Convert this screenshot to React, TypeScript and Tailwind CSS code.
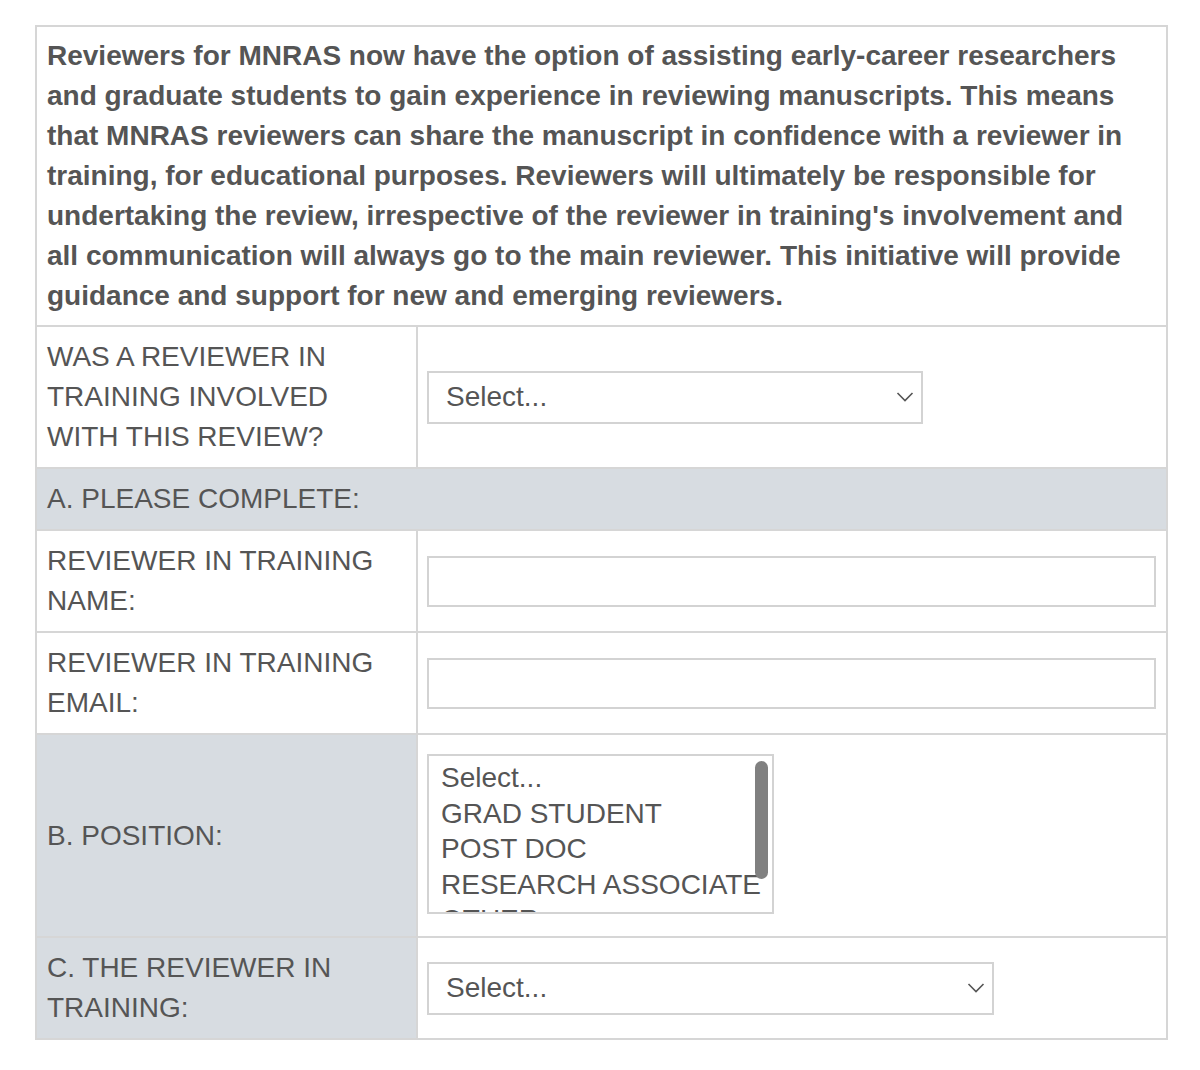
import React from 'react'

const font = { fontFamily: '"Liberation Sans", Arial, sans-serif' }

function Chevron() {
  return (
    <svg width="18" height="12" viewBox="0 0 18 12" className="shrink-0">
      <polyline points="1.5,2 9,9.5 16.5,2" fill="none" stroke="#555" strokeWidth="1.6" />
    </svg>
  )
}

function FakeSelect({ width }: { width: string }) {
  return (
    <div className={`${width} h-[53px] border-2 border-[#d3d3d3] bg-white flex items-center justify-between pl-[17px] pr-[7px]`}>
      <span className="text-[28px] text-[#555]">Select...</span>
      <Chevron />
    </div>
  )
}

function TextBox() {
  return <div className="w-full h-[51px] border-2 border-[#d3d3d3] bg-white" />
}

function Row({ label, gray, children }: { label: React.ReactNode; gray?: boolean; children: React.ReactNode }) {
  return (
    <div className="flex border-t-2 border-[#d6d6d6]">
      <div className={`w-[379px] shrink-0 px-[10px] py-[10px] text-[28px] leading-[40px] text-[#555] flex items-center ${gray ? 'bg-[#d7dce1]' : 'bg-white'}`}>
        <div>{label}</div>
      </div>
      <div className="flex-1 border-l-2 border-[#d6d6d6] pl-[9px] pr-[10px] flex items-center">
        {children}
      </div>
    </div>
  )
}

export default function App() {
  const options = ['Select...', 'GRAD STUDENT', 'POST DOC', 'RESEARCH ASSOCIATE', 'OTHER']
  return (
    <div className="min-h-screen bg-white pt-[25px] pl-[35px]" style={font}>
      <div className="w-[1133px] border-2 border-[#d6d6d6]">
        <div className="px-[10px] pt-[9px] pb-[9px] text-[28px] leading-[40px] font-bold text-[#555]">
          Reviewers for MNRAS now have the option of assisting early-career researchers and graduate students to gain experience in reviewing manuscripts. This means that MNRAS reviewers can share the manuscript in confidence with a reviewer in training, for educational purposes. Reviewers will ultimately be responsible for undertaking the review, irrespective of the reviewer in training's involvement and all communication will always go to the main reviewer. This initiative will provide guidance and support for new and emerging reviewers.
        </div>

        <Row label={<>WAS A REVIEWER IN<br />TRAINING INVOLVED<br />WITH THIS REVIEW?</>}>
          <FakeSelect width="w-[496px]" />
        </Row>

        <div className="border-t-2 border-[#d6d6d6] bg-[#d7dce1] px-[10px] pt-[10px] pb-[10px] text-[28px] leading-[40px] text-[#555]">
          A. PLEASE COMPLETE:
        </div>

        <Row label={<>REVIEWER IN TRAINING<br />NAME:</>}>
          <TextBox />
        </Row>

        <Row label={<>REVIEWER IN TRAINING<br />EMAIL:</>}>
          <TextBox />
        </Row>

        <Row gray label="B. POSITION:">
          <div className="pt-[19px] pb-[22px]">
            <div className="relative w-[347px] h-[160px] border-2 border-[#d3d3d3] bg-white overflow-hidden pl-[12px] pt-[4px]">
              {options.map((o) => (
                <div key={o} className="text-[28px] leading-[35.5px] text-[#555] whitespace-nowrap">{o}</div>
              ))}
              <div className="absolute right-[4px] top-[5px] w-[13px] h-[118px] rounded-full bg-[#808080]" />
            </div>
          </div>
        </Row>

        <Row gray label={<>C. THE REVIEWER IN<br />TRAINING:</>}>
          <FakeSelect width="w-[567px]" />
        </Row>
      </div>
    </div>
  )
}
